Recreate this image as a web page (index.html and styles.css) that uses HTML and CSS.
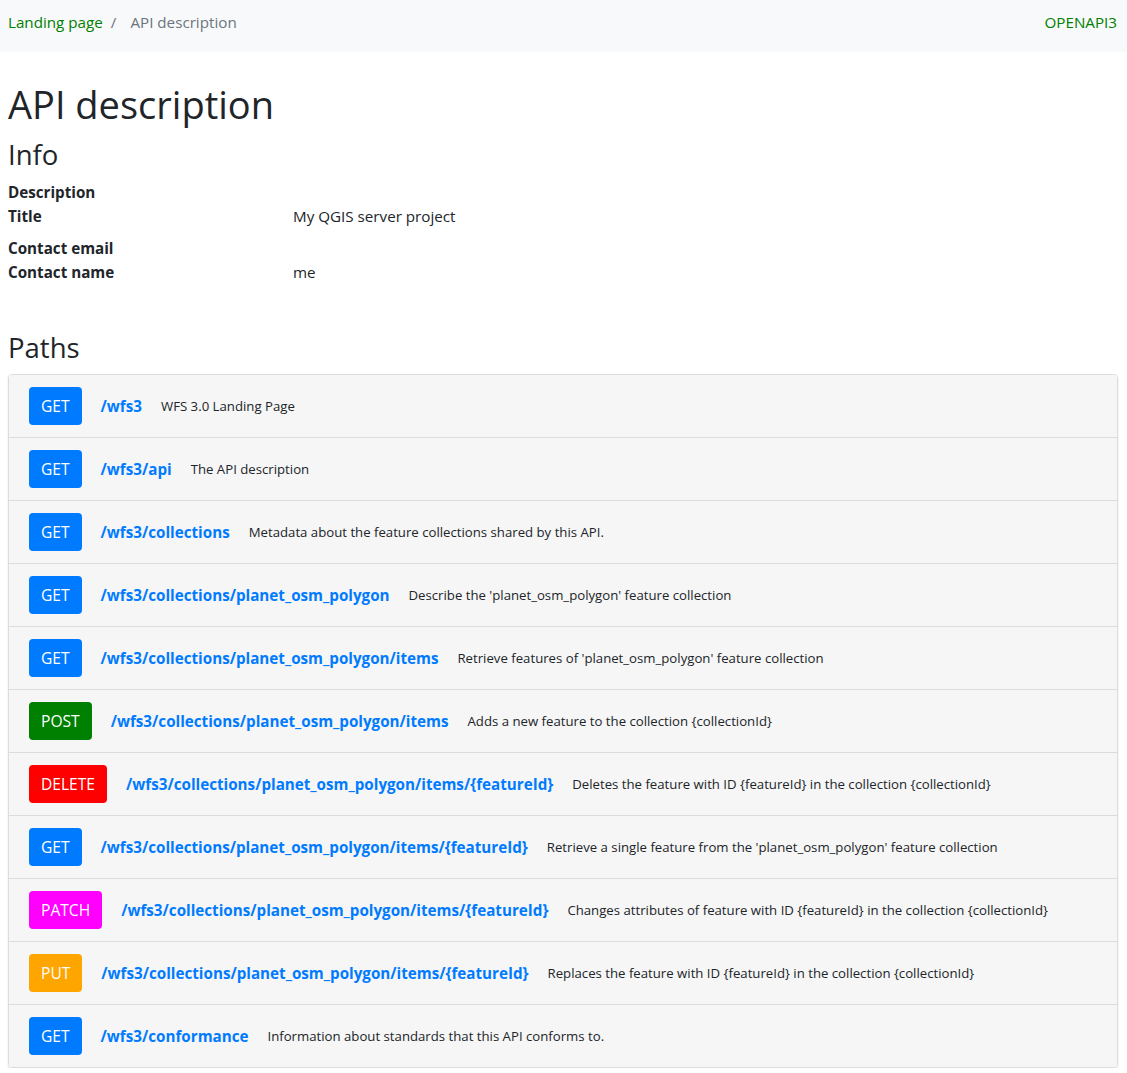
FILE: index.html
```html
<!DOCTYPE html>
<html lang="en">
<head>
<meta charset="utf-8">
<title>API description</title>
<link rel="stylesheet" href="styles.css">
</head>
<body>
<nav class="topbar">
  <ol class="crumbs">
    <li class="crumb"><a class="link" href="#">Landing page</a></li>
    <li class="crumb crumb-sep">/</li>
    <li class="crumb crumb-active">API description</li>
  </ol>
  <a class="link" href="#">OPENAPI3</a>
</nav>
<main class="page">
  <h1 class="title">API description</h1>
  <h2 class="section section-info">Info</h2>
  <dl class="info">
    <dt class="info-key">Description</dt><dd class="info-val"></dd>
    <dt class="info-key">Title</dt><dd class="info-val">My QGIS server project</dd>
    <dt class="info-key">Contact email</dt><dd class="info-val"></dd>
    <dt class="info-key">Contact name</dt><dd class="info-val">me</dd>
  </dl>
  <h2 class="section section-paths">Paths</h2>
  <ul class="paths">
    <li class="path-row"><span class="verb verb-get">GET</span><a class="path" href="#">/wfs3</a><span class="desc">WFS 3.0 Landing Page</span></li>
    <li class="path-row"><span class="verb verb-get">GET</span><a class="path" href="#">/wfs3/api</a><span class="desc">The API description</span></li>
    <li class="path-row"><span class="verb verb-get">GET</span><a class="path" href="#">/wfs3/collections</a><span class="desc">Metadata about the feature collections shared by this API.</span></li>
    <li class="path-row"><span class="verb verb-get">GET</span><a class="path" href="#">/wfs3/collections/planet_osm_polygon</a><span class="desc">Describe the 'planet_osm_polygon' feature collection</span></li>
    <li class="path-row"><span class="verb verb-get">GET</span><a class="path" href="#">/wfs3/collections/planet_osm_polygon/items</a><span class="desc">Retrieve features of 'planet_osm_polygon' feature collection</span></li>
    <li class="path-row"><span class="verb verb-post">POST</span><a class="path" href="#">/wfs3/collections/planet_osm_polygon/items</a><span class="desc">Adds a new feature to the collection {collectionId}</span></li>
    <li class="path-row"><span class="verb verb-delete">DELETE</span><a class="path" href="#">/wfs3/collections/planet_osm_polygon/items/{featureId}</a><span class="desc">Deletes the feature with ID {featureId} in the collection {collectionId}</span></li>
    <li class="path-row"><span class="verb verb-get">GET</span><a class="path" href="#">/wfs3/collections/planet_osm_polygon/items/{featureId}</a><span class="desc">Retrieve a single feature from the 'planet_osm_polygon' feature collection</span></li>
    <li class="path-row"><span class="verb verb-patch">PATCH</span><a class="path" href="#">/wfs3/collections/planet_osm_polygon/items/{featureId}</a><span class="desc">Changes attributes of feature with ID {featureId} in the collection {collectionId}</span></li>
    <li class="path-row"><span class="verb verb-put">PUT</span><a class="path" href="#">/wfs3/collections/planet_osm_polygon/items/{featureId}</a><span class="desc">Replaces the feature with ID {featureId} in the collection {collectionId}</span></li>
    <li class="path-row"><span class="verb verb-get">GET</span><a class="path" href="#">/wfs3/conformance</a><span class="desc">Information about standards that this API conforms to.</span></li>
  </ul>
</main>
</body>
</html>
```
FILE: styles.css
```css
html, body {
  margin: 0;
  padding: 0;
}
body {
  font-family: "Open Sans", "Noto Sans", sans-serif;
  font-size: 15.2px;
  line-height: 24px;
  color: #212529;
  background: #fff;
}
.link {
  color: #008000;
  text-decoration: none;
}
.topbar {
  display: flex;
  justify-content: space-between;
  align-items: flex-start;
  height: 52px;
  box-sizing: border-box;
  padding: 10px 10px 0 8px;
  background: #f8f9fa;
}
.crumbs {
  display: flex;
  margin: 0;
  padding: 0;
  list-style: none;
}
.crumb-sep {
  padding: 0 8px;
  color: #6c757d;
}
.crumb-active {
  color: #6c757d;
  padding-left: 6px;
}
.page {
  padding: 0 9px 0 8px;
}
.title {
  margin: 28px 0 10px;
  font-size: 38px;
  line-height: 48px;
  font-weight: 400;
}
.section {
  margin: 0 0 10px;
  font-size: 27.5px;
  line-height: 34px;
  font-weight: 400;
}
.section-info {
  margin-bottom: 8px;
}
.section-paths {
  margin-top: 39px;
  margin-bottom: 9px;
}
.info {
  display: grid;
  grid-template-columns: 285px 1fr;
  margin: 0;
}
.info-key {
  font-weight: 700;
}
.info-val {
  margin: 0 0 8px;
}
.paths {
  margin: 0;
  padding: 0;
  list-style: none;
  border: 1px solid #dcdcdc;
  border-radius: 4px;
  box-shadow: 0 1px 2px rgba(0, 0, 0, 0.12);
  overflow: hidden;
}
.path-row {
  display: flex;
  align-items: center;
  gap: 19px;
  padding: 12px 20px;
  background: #f6f6f6;
  border-top: 1px solid #dcdcdc;
  white-space: nowrap;
}
.path-row:first-child {
  border-top: 0;
}
.verb {
  display: inline-block;
  padding: 7px 12px;
  border-radius: 4px;
  color: #fff;
  font-size: 15.6px;
  line-height: 24px;
}
.verb-get { background: #007bff; }
.verb-post { background: #008000; }
.verb-delete { background: #ff0000; }
.verb-patch { background: #ff00ff; }
.verb-put { background: #ffa500; }
.path {
  color: #007bff;
  font-weight: 700;
  text-decoration: none;
}
.desc {
  font-size: 13.2px;
}
```
